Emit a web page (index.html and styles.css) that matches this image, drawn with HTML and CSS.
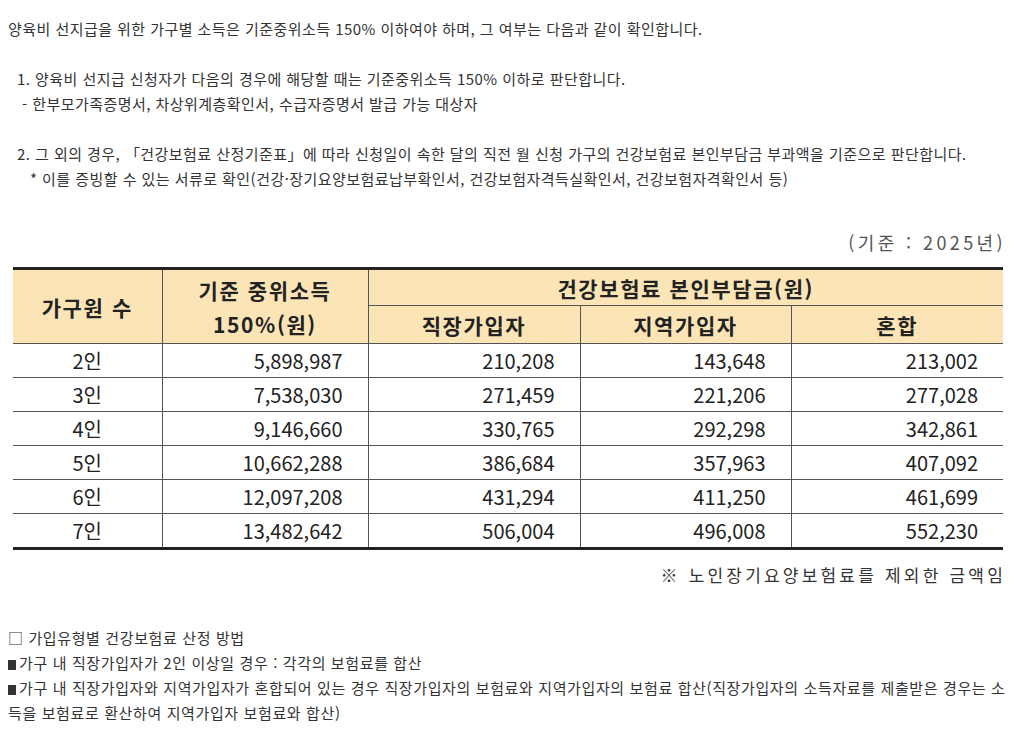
FILE: index.html
```html
<!DOCTYPE html>
<html lang="ko">
<head>
<meta charset="utf-8">
<link rel="stylesheet" href="styles.css">
</head>
<body>
<div class="page">
  <div class="intro">
    <p class="line">양육비 선지급을 위한 가구별 소득은 기준중위소득 150% 이하여야 하며, 그 여부는 다음과 같이 확인합니다.</p>
    <p class="line blank">&nbsp;</p>
    <p class="line ind1">1. 양육비 선지급 신청자가 다음의 경우에 해당할 때는 기준중위소득 150% 이하로 판단합니다.</p>
    <p class="line ind2">- 한부모가족증명서, 차상위계층확인서, 수급자증명서 발급 가능 대상자</p>
    <p class="line blank">&nbsp;</p>
    <p class="line ind1">2. 그 외의 경우, 「건강보험료 산정기준표」에 따라 신청일이 속한 달의 직전 월 신청 가구의 건강보험료 본인부담금 부과액을 기준으로 판단합니다.</p>
    <p class="line ind3">* 이를 증빙할 수 있는 서류로 확인(건강·장기요양보험료납부확인서, 건강보험자격득실확인서, 건강보험자격확인서 등)</p>
  </div>

  <div class="base">(기준 : 2025년)</div>

  <table class="tbl">
    <colgroup>
      <col class="c1"><col class="c2"><col class="c3"><col class="c4"><col class="c5">
    </colgroup>
    <thead>
      <tr class="h1">
        <th rowspan="2">가구원 수</th>
        <th rowspan="2" class="two">기준 중위소득<br>150%(원)</th>
        <th colspan="3">건강보험료 본인부담금(원)</th>
      </tr>
      <tr class="h2">
        <th>직장가입자</th>
        <th>지역가입자</th>
        <th>혼합</th>
      </tr>
    </thead>
    <tbody>
      <tr><td class="lbl">2인</td><td>5,898,987</td><td>210,208</td><td>143,648</td><td>213,002</td></tr>
      <tr><td class="lbl">3인</td><td>7,538,030</td><td>271,459</td><td>221,206</td><td>277,028</td></tr>
      <tr><td class="lbl">4인</td><td>9,146,660</td><td>330,765</td><td>292,298</td><td>342,861</td></tr>
      <tr><td class="lbl">5인</td><td>10,662,288</td><td>386,684</td><td>357,963</td><td>407,092</td></tr>
      <tr><td class="lbl">6인</td><td>12,097,208</td><td>431,294</td><td>411,250</td><td>461,699</td></tr>
      <tr><td class="lbl">7인</td><td>13,482,642</td><td>506,004</td><td>496,008</td><td>552,230</td></tr>
    </tbody>
  </table>

  <div class="note">※ 노인장기요양보험료를 제외한 금액임</div>

  <div class="method">
    <p class="line">□ 가입유형별 건강보험료 산정 방법</p>
    <p class="line"><span class="sq"></span>가구 내 직장가입자가 2인 이상일 경우 : 각각의 보험료를 합산</p>
    <p class="line"><span class="sq"></span>가구 내 직장가입자와 지역가입자가 혼합되어 있는 경우 직장가입자의 보험료와 지역가입자의 보험료 합산(직장가입자의 소득자료를 제출받은 경우는 소득을 보험료로 환산하여 지역가입자 보험료와 합산)</p>
  </div>
</div>
</body>
</html>
```

FILE: styles.css
```css
html, body {
  margin: 0;
  padding: 0;
  background: #ffffff;
}
body {
  font-family: "Noto Sans CJK KR", "Noto Sans", sans-serif;
  color: #333333;
}
.page {
  padding: 16px 0 0 8px;
}
.line {
  margin: 0;
  font-size: 15px;
  line-height: 25px;
  letter-spacing: 0.45px;
  white-space: nowrap;
}
.ind1 { padding-left: 9px; }
.ind2 { padding-left: 14px; }
.ind3 { padding-left: 22px; }

.base {
  margin-top: 38px;
  margin-right: 8px;
  text-align: right;
  font-size: 18px;
  line-height: 26px;
  letter-spacing: 3.4px;
  color: #555555;
}

.tbl {
  margin-top: 12px;
  margin-left: 5px;
  width: 990px;
  border-collapse: collapse;
  table-layout: fixed;
  color: #222222;
  font-size: 20px;
  border-top: 3px solid #222222;
  border-bottom: 3px solid #222222;
}
.c1 { width: 149px; }
.c2 { width: 206px; }
.c3 { width: 212px; }
.c4 { width: 211px; }
.c5 { width: 212px; }

.tbl th {
  background: #fbe5b7;
  font-weight: 700;
  font-size: 21px;
  letter-spacing: 1.6px;
  text-align: center;
  border: 1px solid #555555;
  border-top: none;
  padding: 0;
  line-height: 30px;
}
.tbl th:first-child { border-left: none; }
.tbl tr.h1 th:last-child, .tbl tr.h2 th:last-child { border-right: none; }
.tbl tr.h1 th { height: 35px; }
.tbl tr.h2 th { height: 37px; }
.tbl th.two { line-height: 34px; letter-spacing: 1.6px; }

.tbl td {
  border: 1px solid #555555;
  text-align: right;
  padding: 0 25px 0 0;
  height: 33px;
  line-height: 33px;
}
.tbl td:first-child { border-left: none; }
.tbl td:last-child { border-right: none; }
.tbl tbody tr:last-child td { border-bottom: none; }
.tbl td.lbl {
  text-align: center;
  padding: 0;
}

.note {
  margin-top: 12px;
  margin-right: 8px;
  text-align: right;
  font-size: 17px;
  line-height: 26px;
  letter-spacing: 3.2px;
  color: #333333;
}

.method {
  margin-top: 37px;
}
.method .line {
  font-size: 15px;
  letter-spacing: 0.62px;
  white-space: normal;
  line-height: 25px;
}
.sq {
  display: inline-block;
  width: 8px;
  height: 10px;
  background: #333333;
  margin-right: 3px;
  vertical-align: -1px;
}
```
